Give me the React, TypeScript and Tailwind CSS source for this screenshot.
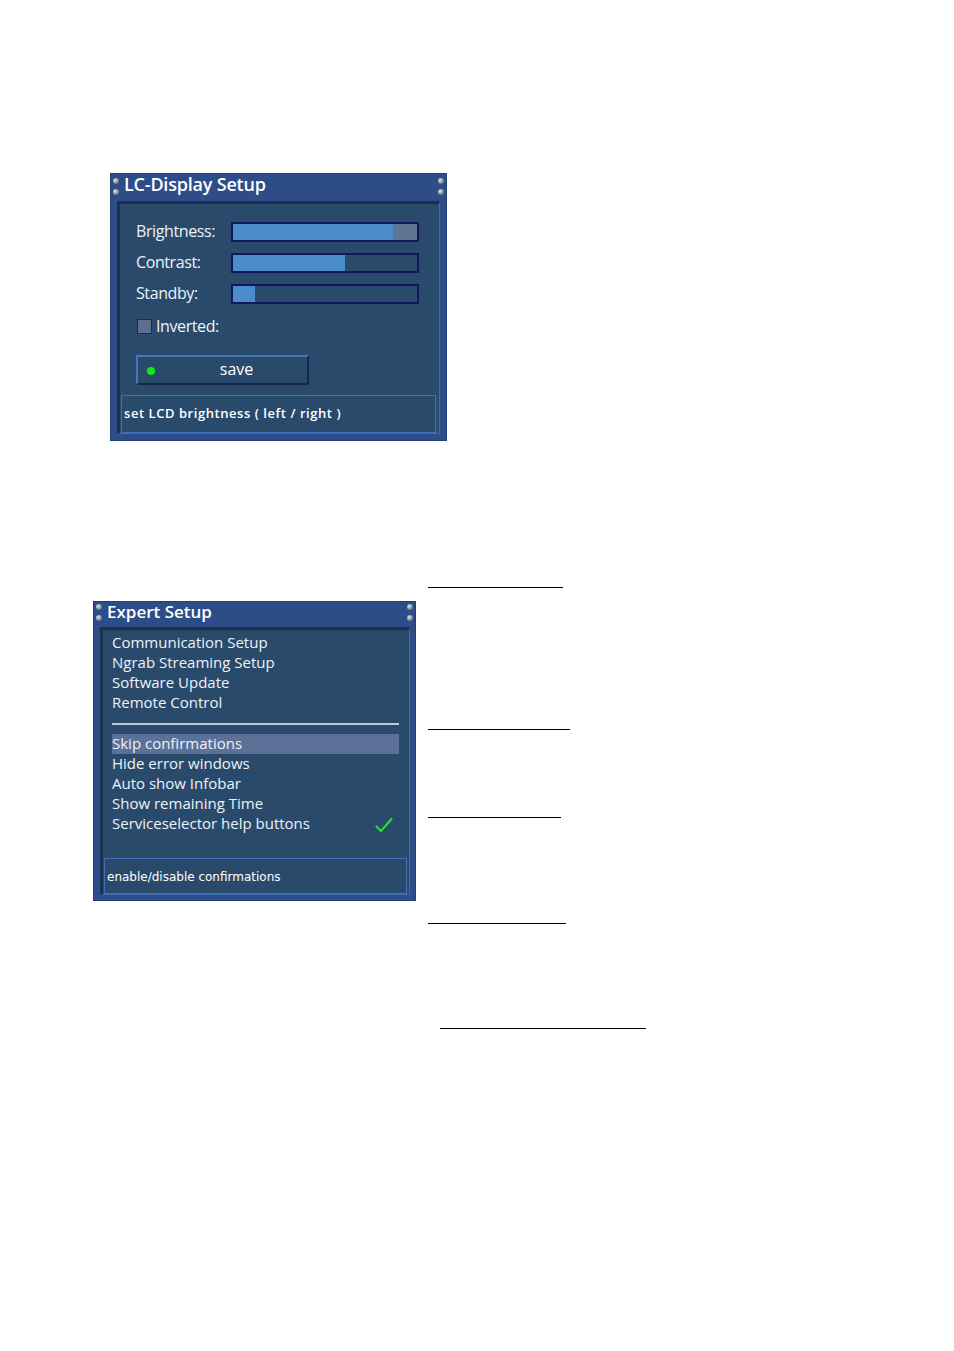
import React from 'react';

const font = { fontFamily: '"Open Sans", "DejaVu Sans", sans-serif' };

function Screws() {
  return (
    <div className="flex flex-col gap-[5px] w-[6px]">
      <span className="block w-[6px] h-[6px] rounded-full bg-[radial-gradient(circle_at_35%_35%,#e4e8ee,#7d8694_60%,#3e4656)]" />
      <span className="block w-[6px] h-[6px] rounded-full bg-[radial-gradient(circle_at_35%_35%,#e4e8ee,#7d8694_60%,#3e4656)]" />
    </div>
  );
}

function Bar({ value, rest }: { value: number; rest?: number }) {
  return (
    <div className="w-[188px] h-[20px] border-2 border-[#13185a] bg-[#2b4b6d] flex">
      <div className="h-full bg-[#4b8ccc]" style={{ width: `${value}%` }} />
      {rest ? <div className="h-full bg-[#5f7594]" style={{ width: `${rest}%` }} /> : null}
    </div>
  );
}

function LcdSetup() {
  return (
    <div className="w-[337px] h-[268px] bg-[#2c4d88] border border-[#223f72] flex flex-col" style={font}>
      <div className="h-[27px] flex items-start justify-between px-[2px]">
        <div className="flex items-start gap-[5px]">
          <div className="pt-[4px]">
            <Screws />
          </div>
          <span className="text-white text-[18px] font-semibold leading-[20px] tracking-[-0.2px]">LC-Display Setup</span>
        </div>
        <div className="pt-[4px]">
          <Screws />
        </div>
      </div>
      <div className="flex-1 ml-[6px] mr-[6px] mb-[6px] bg-[#2a4a6c] border-t-[3px] border-l-[3px] border-[#1b2f4f] border-r border-b border-r-[#3e6aae] border-b-[#3e6aae] flex flex-col">
        <div className="pl-[16px] pt-[18px] flex flex-col gap-[11px]">
          {[
            { label: 'Brightness:', value: 87, rest: 13 },
            { label: 'Contrast:', value: 61 },
            { label: 'Standby:', value: 12 },
          ].map((r) => (
            <div key={r.label} className="flex items-center h-[20px]">
              <span className="w-[95px] text-[#eef2f7] text-[16px] tracking-[-0.4px] -mt-[2px]">{r.label}</span>
              <Bar value={r.value} rest={r.rest} />
            </div>
          ))}
        </div>
        <div className="pl-[17px] mt-[14px] flex items-center gap-[4px] h-[16px]">
          <span className="block w-[15px] h-[15px] bg-[#5a6e8e] border border-[#1d2a4a]" />
          <span className="text-[#eef2f7] text-[16px] tracking-[-0.4px]">Inverted:</span>
        </div>
        <div className="ml-[16px] mt-[21px] w-[173px] h-[30px] border-2 border-[#4676bb] border-b-[#17264a] border-r-[#17264a] flex items-center relative">
          <span className="absolute left-[9px] top-[10px] w-[8px] h-[8px] rounded-full bg-[#10e81a]" />
          <span className="w-full pl-[28px] text-center text-white text-[16px] font-medium -mt-[2px]">save</span>
        </div>
        <div className="ml-[1px] mr-[3px] mt-[10px] h-[38px] border border-[#3f70b8] flex items-center pl-[2px]">
          <span className="text-white text-[13px] font-semibold tracking-[0.55px] -mt-[1px]">
            set LCD brightness ( left / right )
          </span>
        </div>
      </div>
    </div>
  );
}

function ExpertSetup() {
  const top = ['Communication Setup', 'Ngrab Streaming Setup', 'Software Update', 'Remote Control'];
  const bottom = ['Skip confirmations', 'Hide error windows', 'Auto show Infobar', 'Show remaining Time', 'Serviceselector help buttons'];
  return (
    <div className="w-[323px] h-[300px] bg-[#2c4d88] border border-[#223f72] flex flex-col" style={font}>
      <div className="h-[25px] flex items-start justify-between px-[2px]">
        <div className="flex items-start gap-[5px]">
          <div className="pt-[2px]">
            <Screws />
          </div>
          <span className="text-white text-[17px] font-semibold leading-[20px]">Expert Setup</span>
        </div>
        <div className="pt-[2px]">
          <Screws />
        </div>
      </div>
      <div className="flex-1 ml-[6px] mr-[5px] mb-[5px] bg-[#2a4a6c] border-t-[3px] border-l-[3px] border-[#1b2f4f] border-r border-b border-r-[#3e6aae] border-b-[#3e6aae] flex flex-col">
        <div className="pl-[9px] pr-[10px] pt-[3px] flex flex-col">
          {top.map((t) => (
            <div key={t} className="h-[20px] flex items-center text-[#eef2f7] text-[15px] -translate-y-[1px]">{t}</div>
          ))}
          <div className="mt-[10px] mb-[9px] h-[2px] bg-[#c4c8ce]" />
          {bottom.map((t, i) => (
            <div
              key={t}
              className={`h-[20px] flex items-center justify-between text-[#eef2f7] text-[15px] ${i === 0 ? 'bg-[#5b7197]' : ''}`}
            >
              <span className="-mt-[1px]">{t}</span>
              {i === 4 ? (
                <svg width="18" height="16" viewBox="0 0 18 16" className="mr-[6px] mt-[2px]">
                  <path d="M1.5 9.5 L6 14 L16.5 2" fill="none" stroke="#22e022" strokeWidth="2.2" strokeLinecap="round" strokeLinejoin="round" />
                </svg>
              ) : null}
            </div>
          ))}
        </div>
        <div className="ml-[1px] mr-[2px] mt-auto mb-[0px] h-[36px] border border-[#3f70b8] flex items-center pl-[2px]">
          <span className="text-white text-[12px] mt-[2px]" style={{ fontFamily: '"DejaVu Sans", sans-serif' }}>
            enable/disable confirmations
          </span>
        </div>
      </div>
    </div>
  );
}

export default function App() {
  return (
    <div className="w-[954px] min-h-[1351px] bg-white pt-[173px]">
      <div className="ml-[110px]">
        <LcdSetup />
      </div>

      <div className="mt-[146px] flex items-start">
        <div className="ml-[93px] mt-[14px]">
          <ExpertSetup />
        </div>
        <div className="ml-[12px] flex flex-col">
          <div className="w-[135px] h-[1px] bg-black" />
          <div className="mt-[141px] w-[142px] h-[1px] bg-black" />
          <div className="mt-[87px] w-[133px] h-[1px] bg-black" />
          <div className="mt-[105px] w-[138px] h-[1px] bg-black" />
          <div className="mt-[104px] ml-[12px] w-[206px] h-[1px] bg-black" />
        </div>
      </div>
    </div>
  );
}
